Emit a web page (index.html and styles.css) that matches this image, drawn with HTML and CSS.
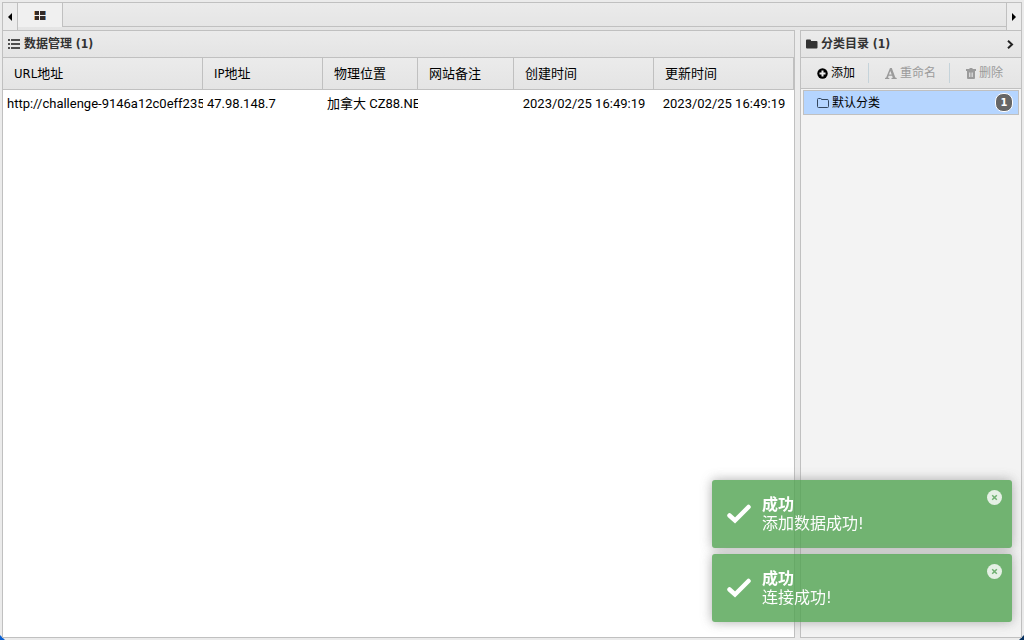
FILE: index.html
```html
<!DOCTYPE html>
<html lang="zh">

<head>
    <meta charset="UTF-8">
    <title>数据管理</title>
    <link rel="stylesheet" href="styles.css">
</head>

<body>
    <div class="app">
        <nav class="tabbar">
            <button class="arrow left" aria-label="向左"><svg width="4" height="8" viewBox="0 0 4 8"><path d="M4 0v8L0 4z"/></svg></button>
            <button class="tab" aria-label="主页">
                <svg width="12" height="9" viewBox="0 0 12 9">
                    <path fill="#dda15e" d="M0 0h1v4H0zM0 5h1v4H0z"/>
                    <path fill="#5c8fc0" d="M11 0h1v4h-1zM11 5h1v4h-1z"/>
                    <path fill="#332a28" d="M1 0h4v4H1zM6 0h5v4H6zM1 5h4v4H1zM6 5h5v4H6z"/>
                </svg>
            </button>
            <div class="space"></div>
            <button class="arrow right" aria-label="向右"><svg width="4" height="8" viewBox="0 0 4 8"><path d="M0 0v8l4-4z"/></svg></button>
        </nav>

        <div class="layout">
            <main class="panel data">
                <h2 class="title">
                    <svg width="12" height="10" viewBox="0 0 12 10"><path d="M0 0h2v2H0zM0 4h2v2H0zM0 8h2v2H0zM3 0h9v2H3zM3 4h9v2H3zM3 8h9v2H3z" opacity=".85"/></svg>
                    <span>数据管理 (1)</span>
                </h2>
                <table class="grid">
                    <colgroup>
                        <col class="url">
                        <col class="ip">
                        <col class="addr">
                        <col class="note">
                        <col class="time">
                        <col class="time">
                    </colgroup>
                    <thead>
                        <tr>
                            <th>URL地址</th>
                            <th>IP地址</th>
                            <th>物理位置</th>
                            <th>网站备注</th>
                            <th>创建时间</th>
                            <th>更新时间</th>
                        </tr>
                    </thead>
                    <tbody>
                        <tr>
                            <td>http://challenge-9146a12c0eff235</td>
                            <td>47.98.148.7</td>
                            <td>加拿大 CZ88.NET</td>
                            <td></td>
                            <td class="center">2023/02/25 16:49:19</td>
                            <td class="center">2023/02/25 16:49:19</td>
                        </tr>
                    </tbody>
                </table>
            </main>

            <aside class="panel side">
                <h2 class="title">
                    <svg width="12" height="10" viewBox="0 0 12 10"><path d="M0 1.5Q0 .5 1 .5h3q1 0 1 1V2h5.500q1 0 1 1v5.500q0 1-1 1H1q-1 0-1-1z"/></svg>
                    <span>分类目录 (1)</span>
                    <button class="collapse" aria-label="折叠"><svg width="7" height="9" viewBox="0 0 7 9"><path d="M1 .8l4 3.700-4 3.700" fill="none" stroke="#222" stroke-width="2"/></svg></button>
                </h2>
                <div class="toolbar">
                    <button class="tool">
                        <svg width="11" height="11" viewBox="0 0 11 11"><circle cx="5.500" cy="5.500" r="5.200"/><path d="M5.500 2.500v6M2.500 5.500h6" stroke="#eee" stroke-width="2"/></svg>
                        <span>添加</span>
                    </button>
                    <button class="tool" disabled>
                        <svg width="12" height="11" viewBox="0 0 12 11"><path fill-rule="evenodd" d="M5 0h1.800l3.500 9.600 1.400.5V11H6.500v-.9l1.300-.4-.7-2H3.600l-.6 2 1.300.4v.9H0v-.9l1.200-.5zM4 6.600h2.700L5.300 2.900z"/></svg>
                        <span>重命名</span>
                    </button>
                    <button class="tool" disabled>
                        <svg width="10" height="11" viewBox="0 0 10 11"><path fill-rule="evenodd" d="M3 1l1-1h2l1 1h3v2H0V1zM1 3h8v7q0 1-1 1H2q-1 0-1-1zM3 4.500V9h.8V4.500zM4.700 4.500V9h.7V4.500zM6.300 4.500V9h.7V4.500z"/></svg>
                        <span>删除</span>
                    </button>
                </div>
                <ul class="tree">
                    <li>
                        <button class="node">
                            <svg width="12" height="10" viewBox="0 0 12 10"><path d="M.5 1.500q0-1 1-1h2q1 0 1 1H10q1.500 0 1.500 1v6q0 1-1 1h-9q-1 0-1-1z" fill="none" stroke="#34475e"/></svg>
                            <span>默认分类</span>
                            <b class="badge">1</b>
                        </button>
                    </li>
                </ul>
            </aside>
        </div>
    </div>

    <section class="toasts">
        <article class="toast">
            <svg class="check" width="26" height="20" viewBox="0 0 26 20"><path d="M3.500 11.500L9 16.500 22.500 3" fill="none" stroke="#fff" stroke-width="4.500" stroke-linecap="round"/></svg>
            <div>
                <h3>成功</h3>
                <p>添加数据成功!</p>
            </div>
            <button class="close" aria-label="关闭"><svg width="15" height="15" viewBox="0 0 15 15"><circle cx="7.500" cy="7.500" r="7.500" fill="#e1efe1"/><path d="M5.200 5.200l4.600 4.600M9.800 5.200L5.200 9.800" stroke="#4f9f50" stroke-width="1.500"/></svg></button>
        </article>
        <article class="toast">
            <svg class="check" width="26" height="20" viewBox="0 0 26 20"><path d="M3.500 11.500L9 16.500 22.500 3" fill="none" stroke="#fff" stroke-width="4.500" stroke-linecap="round"/></svg>
            <div>
                <h3>成功</h3>
                <p>连接成功!</p>
            </div>
            <button class="close" aria-label="关闭"><svg width="15" height="15" viewBox="0 0 15 15"><circle cx="7.500" cy="7.500" r="7.500" fill="#e1efe1"/><path d="M5.200 5.200l4.600 4.600M9.800 5.200L5.200 9.800" stroke="#4f9f50" stroke-width="1.500"/></svg></button>
        </article>
    </section>
</body>

</html>
```
FILE: styles.css
```css
* {
    box-sizing: border-box;
}

body {
    margin: 0;
    background: #ebebeb;
    color: #000;
    font-family: "DejaVu Sans Condensed", "Noto Sans CJK SC", sans-serif;
    font-size: 13px;
    line-height: 18px;
}

button {
    margin: 0;
    padding: 0;
    border: none;
    background: none;
    color: inherit;
    font: inherit;
}

svg {
    flex: none;
    display: block;
    fill: currentColor;
}

/* blue window corners at the bottom */
.app {
    display: flex;
    flex-direction: column;
    height: 100vh;
    padding: 2px;
    background: linear-gradient(45deg, #0a5fd0 3px, transparent 4px), linear-gradient(-45deg, #06305f 3px, transparent 4px);
}

/* tabs */
.tabbar {
    display: flex;
    height: 28px;
    border: 1px solid #c0c0c0;
    border-bottom: none;
    background: linear-gradient(#ebebeb, #e4e4e4);
}

.arrow,
.tab {
    display: flex;
    align-items: center;
    justify-content: center;
}

.arrow {
    width: 15px;
    padding-top: 1px;
    background: #ececec;
}

.arrow.left {
    border-right: 1px solid #c0c0c0;
}

.arrow.right {
    border-left: 1px solid #c0c0c0;
}

.tab {
    width: 45px;
    height: 24px;
    border-right: 1px solid #c0c0c0;
    background: #f0f0f0;
}

.space {
    flex: 1;
    height: 24px;
    border-bottom: 1px solid #c0c0c0;
}

/* panels */
.layout {
    display: flex;
    flex: 1;
    gap: 5px;
    min-height: 0;
}

.panel {
    border: 1px solid #c0c0c0;
}

.data {
    flex: 1;
    min-width: 0;
    background: #fff;
}

.side {
    width: 222px;
    background: #f3f3f3;
}

.title {
    display: flex;
    align-items: center;
    gap: 3px;
    height: 27px;
    margin: 0;
    padding: 0 5px;
    border-bottom: 1px solid #c0c0c0;
    background: linear-gradient(#ebebeb, #e4e4e4);
    color: #333;
    font-size: 12px;
}

.data .title {
    gap: 4px;
}

.collapse {
    margin-left: auto;
    padding: 2px;
}

/* data table */
.grid {
    width: 100%;
    border-collapse: separate;
    border-spacing: 0;
    table-layout: fixed;
}

.url {
    width: 200px;
}

.ip {
    width: 120px;
}

.addr {
    width: 95px;
}

.note {
    width: 96px;
}

.grid th {
    height: 32px;
    padding: 0 11px;
    border-right: 1px solid #c0c0c0;
    border-bottom: 1px solid #c0c0c0;
    background: linear-gradient(#ebebeb, #e4e4e4);
    font-weight: normal;
    text-align: left;
}

.grid td {
    height: 27px;
    padding: 0 0 0 4px;
    overflow: hidden;
    font-family: Roboto, "Noto Sans CJK SC", sans-serif;
    white-space: nowrap;
}

.grid .center {
    padding: 0;
    text-align: center;
}

/* categories */
.toolbar {
    display: flex;
    align-items: center;
    height: 31px;
    border-bottom: 1px solid #c0c0c0;
    background: linear-gradient(#ebebeb, #e4e4e4);
}

.tool {
    display: flex;
    align-items: center;
    gap: 3px;
    height: 20px;
    padding: 0 13px 0 16px;
    font-size: 12px;
    white-space: nowrap;
}

.tool + .tool {
    border-left: 1px solid #c5d3da;
}

.tool:disabled {
    color: #9b9b9b;
}

.tree {
    margin: 0;
    padding: 1px 2px;
    list-style: none;
}

.node {
    display: flex;
    align-items: center;
    gap: 3px;
    width: 100%;
    height: 25px;
    padding: 0 5px 0 13px;
    border: 1px solid #c0c0c0;
    background: #b5d5ff;
    font-size: 12px;
}

.badge {
    width: 18px;
    height: 19px;
    margin-left: auto;
    border: 1px solid #fff;
    border-radius: 8px;
    background: #666;
    color: #fff;
    font-size: 11px;
    line-height: 17px;
}

/* messages */
.toasts {
    position: fixed;
    right: 12px;
    bottom: 18px;
    display: flex;
    flex-direction: column;
    gap: 6px;
    width: 300px;
}

.toast {
    display: flex;
    gap: 10px;
    padding: 15px 10px 15px 14px;
    border-radius: 3px;
    background: #51a351;
    box-shadow: 0 0 12px #999;
    color: #fff;
    font-size: 16px;
    line-height: 19px;
    opacity: .8;
}

.toast h3,
.toast p {
    margin: 0;
    font-size: 16px;
}

.check {
    margin-top: 9px;
}

.close {
    align-self: flex-start;
    margin-top: -5px;
    margin-left: auto;
}
```
